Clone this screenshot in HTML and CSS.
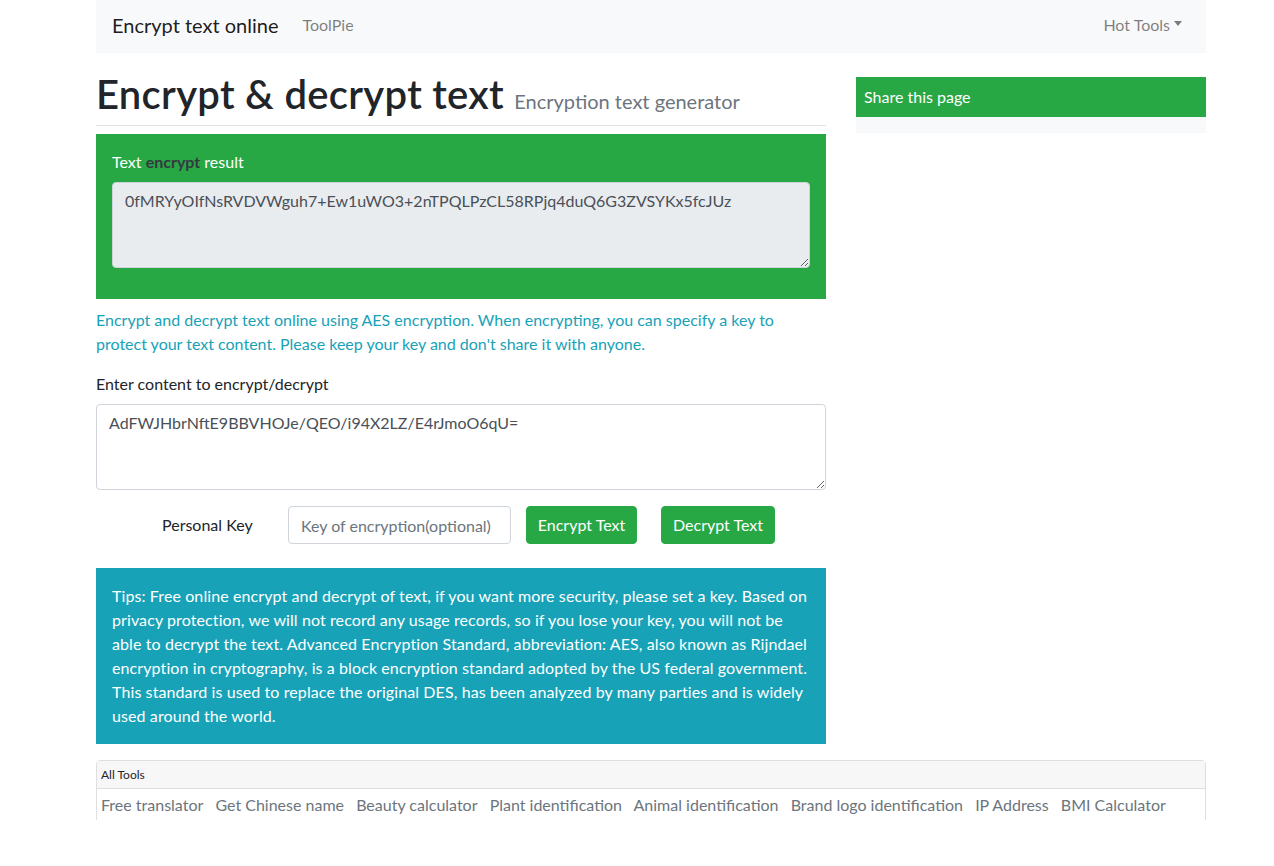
FILE: index.html
```html
<!DOCTYPE html>
<html lang="en">
<head>
<meta charset="utf-8">
<title>Encrypt text online</title>
<link rel="stylesheet" href="styles.css">
</head>
<body>
<div class="page">
  <div class="container">
    <nav class="navbar">
      <a class="brand" href="#">Encrypt text online</a>
      <a class="nav-link" href="#">ToolPie</a>
      <a class="nav-link dropdown" href="#">Hot Tools<span class="caret"></span></a>
    </nav>
    <div class="row">
      <main class="main-col">
        <div class="page-header">
          <h1>Encrypt &amp; decrypt text <small>Encryption text generator</small></h1>
        </div>
        <div class="result-box">
          <label class="result-label">Text <b>encrypt</b> result</label>
          <textarea class="result-area" readonly>0fMRYyOIfNsRVDVWguh7+Ew1uWO3+2nTPQLPzCL58RPjq4duQ6G3ZVSYKx5fcJUz</textarea>
        </div>
        <p class="intro">Encrypt and decrypt text online using AES encryption. When encrypting, you can specify a key to protect your text content. Please keep your key and don't share it with anyone.</p>
        <label class="content-label">Enter content to encrypt/decrypt</label>
        <textarea class="content-area">AdFWJHbrNftE9BBVHOJe/QEO/i94X2LZ/E4rJmoO6qU=</textarea>
        <div class="key-row">
          <span class="key-label">Personal Key</span>
          <input class="key-input" type="text" placeholder="Key of encryption(optional)">
          <button class="btn btn-enc">Encrypt Text</button>
          <button class="btn btn-dec">Decrypt Text</button>
        </div>
        <div class="tips">Tips: Free online encrypt and decrypt of text, if you want more security, please set a key. Based on privacy protection, we will not record any usage records, so if you lose your key, you will not be able to decrypt the text. Advanced Encryption Standard, abbreviation: AES, also known as Rijndael encryption in cryptography, is a block encryption standard adopted by the US federal government. This standard is used to replace the original DES, has been analyzed by many parties and is widely used around the world.</div>
      </main>
      <aside class="side-col">
        <div class="share-head">Share this page</div>
        <div class="share-body"></div>
      </aside>
    </div>
    <div class="card">
      <div class="card-header">All Tools</div>
      <div class="card-body">
        <a href="#">Free translator</a>
        <a href="#">Get Chinese name</a>
        <a href="#">Beauty calculator</a>
        <a href="#">Plant identification</a>
        <a href="#">Animal identification</a>
        <a href="#">Brand logo identification</a>
        <a href="#">IP Address</a>
        <a href="#">BMI Calculator</a>
      </div>
    </div>
  </div>
</div>
</body>
</html>
```
FILE: styles.css
```css
* { box-sizing: border-box; }
html, body { margin: 0; padding: 0; background: #fff; }
body {
  font-family: "Segoe UI", Lato, "Open Sans", sans-serif;
  font-size: 16px;
  line-height: 24px;
  color: #212529;
}
a { text-decoration: none; }
.page { height: 820px; overflow: hidden; }
.container { width: 1110px; margin-left: 96px; }

.navbar {
  height: 53px;
  background: #f8f9fa;
  display: flex;
  align-items: center;
  padding: 0 16px 4px;
}
.brand { font-size: 20px; color: rgba(0,0,0,.9); margin-right: 16px; line-height: 30px; }
.nav-link { color: rgba(0,0,0,.5); padding: 0 8px; }
.dropdown { margin-left: auto; display: flex; align-items: center; }
.caret {
  display: inline-block;
  margin-left: 4px;
  border-top: 5px solid rgba(0,0,0,.5);
  border-left: 4px solid transparent;
  border-right: 4px solid transparent;
  position: relative;
  top: -1px;
}

.row { display: flex; gap: 30px; }
.main-col { width: 730px; display: flex; flex-direction: column; }
.side-col { width: 350px; padding-top: 24px; }

.page-header { border-bottom: 1px solid #dee2e6; margin-top: 17px; padding-bottom: 7px; }
h1 {
  margin: 0;
  font-size: 40px;
  font-weight: 600;
  line-height: 48px;
  color: #212529;
  letter-spacing: 0.3px;
}
h1 small { font-size: 20px; font-weight: 400; color: #6c757d; line-height: 1; letter-spacing: 0; }

.result-box {
  margin-top: 8px;
  background: #28a745;
  padding: 16px 16px 31px;
  display: flex;
  flex-direction: column;
}
.result-label { color: #fff; margin-bottom: 8px; }
.result-label b { color: #343a40; font-weight: 700; }
.result-area, .content-area {
  font: inherit;
  color: #495057;
  border: 1px solid #ced4da;
  border-radius: 4px;
  padding: 6px 12px;
  height: 86px;
  resize: vertical;
  width: 100%;
}
.result-area { background: #e9ecef; }
.content-area { background: #fff; }

.intro { color: #17a2b8; margin: 9px 0 16px; }
.content-label { margin-bottom: 8px; }

.key-row { display: flex; align-items: center; margin-top: 16px; height: 38px; }
.key-label { width: 192px; padding-left: 66px; }
.key-input {
  font: inherit;
  width: 223px;
  height: 38px;
  border: 1px solid #ced4da;
  border-radius: 4px;
  padding: 6px 12px;
  color: #495057;
}
.key-input::placeholder { color: #6c757d; }
.btn {
  font: inherit;
  height: 38px;
  background: #28a745;
  color: #fff;
  border: 1px solid #28a745;
  border-radius: 4px;
  padding: 0;
}
.btn-enc { width: 111px; margin-left: 15px; }
.btn-dec { width: 114px; margin-left: 24px; }

.tips {
  margin-top: 24px;
  background: #17a2b8;
  color: #fff;
  padding: 16px;
  letter-spacing: 0.1px;
}

.share-head {
  background: #28a745;
  color: #fff;
  height: 40px;
  line-height: 40px;
  padding: 0 8px;
}
.share-body { background: #f8f9fa; height: 16px; }

.card {
  margin-top: 16px;
  border: 1px solid #dfdfdf;
  border-radius: 4px 4px 0 0;
}
.card-header {
  background: #f7f7f7;
  border-bottom: 1px solid #dfdfdf;
  font-size: 12px;
  height: 28px;
  line-height: 28px;
  padding: 0 4px;
}
.card-body { padding: 4px 4px 20px; }
.card-body a { color: #6c757d; margin-right: 8px; }
```
